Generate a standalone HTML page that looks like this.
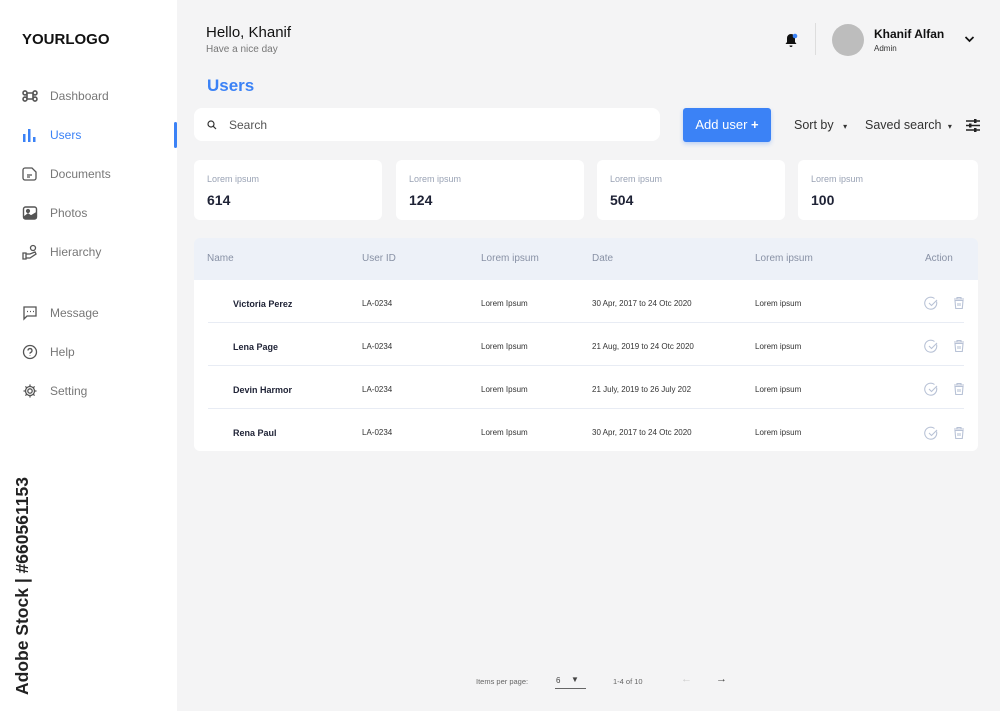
<!DOCTYPE html><html><head><style>
*{margin:0;padding:0;box-sizing:border-box}
body{width:1000px;height:711px;background:#f4f4f5;font-family:"Liberation Sans",sans-serif;position:relative;overflow:hidden;color:#222}
.a{position:absolute}
.side{left:0;top:0;width:177px;height:711px;background:#fff}
.nav{left:22px;font-size:12px;color:#777;display:flex;align-items:center;gap:12px}
.nav svg{width:16px;height:16px}
.card{background:#fff;border-radius:6px;top:160px;height:60px}
.card .l{position:absolute;left:13px;top:14px;font-size:9px;color:#9aa3b5}
.card .v{position:absolute;left:13px;top:32px;font-size:14px;font-weight:bold;color:#1e2235}
.th{font-size:10px;color:#8891a5;top:253px}
.row{left:194px;width:784px;height:43px;background:#fff}
.row span{position:absolute;top:19px;font-size:8px;color:#333}
.row .n{font-weight:bold;color:#1e2235;font-size:9px}
.row .ln{position:absolute;left:14px;right:14px;bottom:0;border-bottom:1px solid #e8ecf4}
</style></head><body>
<div class="a side"></div>
<div class="a" style="left:22px;top:31px;font-size:15px;font-weight:bold;color:#111">YOURLOGO</div>
<div class="a nav" style="top:88px"><svg viewBox="0 0 16 16" fill="none" stroke="#555" stroke-width="1.6"><path d="M5 5h6v6H5zM5 5a2 2 0 1 1 0-0.1M11 5a2 2 0 1 0 0-.1M5 11a2 2 0 1 0 0 .1M11 11a2 2 0 1 1 0 .1"/></svg>Dashboard</div>
<div class="a nav" style="top:127px;color:#3b82f6"><svg viewBox="0 0 16 16" fill="#3b82f6"><rect x="1" y="7" width="2.5" height="8"/><rect x="6" y="2" width="2.5" height="13"/><rect x="11" y="10" width="2.5" height="5"/></svg>Users</div>
<div class="a" style="left:174px;top:122px;width:3px;height:26px;background:#3b82f6;border-radius:2px"></div>
<div class="a nav" style="top:166px"><svg viewBox="0 0 16 16" fill="none" stroke="#555" stroke-width="1.3"><path d="M3 2h7l4 4v6a2 2 0 0 1-2 2H3a2 2 0 0 1-2-2V4a2 2 0 0 1 2-2zM5 9h5M5 11h3"/></svg>Documents</div>
<div class="a nav" style="top:205px"><svg viewBox="0 0 16 16" fill="none" stroke="#555" stroke-width="1.4"><rect x="1.5" y="2" width="13" height="12" rx="2"/><circle cx="6" cy="6" r="1.4" fill="#555"/><path d="M2 12l4-3 3 2 5-3v5H2z" fill="#555"/></svg>Photos</div>
<div class="a nav" style="top:244px"><svg viewBox="0 0 16 16" fill="none" stroke="#555" stroke-width="1.3"><circle cx="11" cy="4" r="2.5"/><path d="M1 9h3v6H1zM4 10h4l5-2 1 2-6 4H4"/></svg>Hierarchy</div>
<div class="a nav" style="top:305px"><svg viewBox="0 0 16 16" fill="none" stroke="#555" stroke-width="1.3"><path d="M2 2h12v9H5l-3 3z"/><path d="M5 6.5h1M8 6.5h1M11 6.5h1"/></svg>Message</div>
<div class="a nav" style="top:344px"><svg viewBox="0 0 16 16" fill="none" stroke="#555" stroke-width="1.3"><circle cx="8" cy="8" r="6.5"/><path d="M6 6.5a2 2 0 1 1 2.5 2c-.5.2-.5.6-.5 1.2M8 11.5v.5"/></svg>Help</div>
<div class="a nav" style="top:383px"><svg viewBox="0 0 16 16" fill="none" stroke="#555" stroke-width="1.3"><circle cx="8" cy="8" r="2.2"/><path d="M8 1.5v2M8 12.5v2M1.5 8h2M12.5 8h2M3.4 3.4l1.4 1.4M11.2 11.2l1.4 1.4M3.4 12.6l1.4-1.4M11.2 4.8l1.4-1.4"/><circle cx="8" cy="8" r="4.5"/></svg>Setting</div>
<div class="a" style="left:12px;top:695px;transform:rotate(-90deg);transform-origin:0 0;font-size:17.5px;font-weight:bold;color:#222;white-space:nowrap;width:230px">Adobe Stock | #660561153</div>

<div class="a" style="left:206px;top:24px;font-size:15px;color:#111">Hello, Khanif</div>
<div class="a" style="left:206px;top:44px;font-size:10px;color:#777">Have a nice day</div>
<svg class="a" style="left:783px;top:32px" width="16" height="16" viewBox="0 0 16 16"><path d="M8 2a4 4 0 0 0-4 4v4l-1.5 2h11L12 10V6a4 4 0 0 0-4-4zM6.5 13.5a1.5 1.5 0 0 0 3 0z" fill="#111"/><circle cx="12" cy="4" r="2.3" fill="#3b82f6"/></svg>
<div class="a" style="left:815px;top:23px;width:1px;height:32px;background:#ddd"></div>
<div class="a" style="left:832px;top:24px;width:32px;height:32px;border-radius:50%;background:#bdbdbd"></div>
<div class="a" style="left:874px;top:27px;font-size:12px;font-weight:bold;color:#111">Khanif Alfan</div>
<div class="a" style="left:874px;top:44px;font-size:8px;color:#333">Admin</div>
<svg class="a" style="left:964px;top:35px" width="11" height="8"><path d="M1.5 2l4 4 4-4" stroke="#111" stroke-width="1.7" fill="none"/></svg>

<div class="a" style="left:207px;top:76px;font-size:17px;font-weight:bold;color:#3b82f6">Users</div>
<div class="a" style="left:194px;top:108px;width:466px;height:33px;background:#fff;border-radius:8px"></div>
<svg class="a" style="left:207px;top:120px" width="10" height="10"><circle cx="4" cy="4" r="3" stroke="#333" stroke-width="1.2" fill="none"/><path d="M6.3 6.3l2.7 2.7" stroke="#333" stroke-width="1.2"/></svg>
<div class="a" style="left:229px;top:118px;font-size:12px;color:#555">Search</div>
<div class="a" style="left:683px;top:108px;width:88px;height:34px;background:#3b82f6;border-radius:3px;color:#fff;font-size:13px;line-height:34px;text-align:center;box-shadow:0 2px 4px rgba(59,130,246,.3)">Add user <b>+</b></div>
<div class="a" style="left:794px;top:118px;font-size:12.5px;color:#333">Sort by <span style="font-size:8px;margin-left:6px">&#9662;</span></div>
<div class="a" style="left:865px;top:118px;font-size:12.5px;color:#333">Saved search <span style="font-size:8px;margin-left:3px">&#9662;</span></div>
<svg class="a" style="left:965px;top:118px" width="16" height="15"><path d="M1 3h14M1 7.5h14M1 12h14" stroke="#222" stroke-width="1.4"/><rect x="9" y="1" width="2.5" height="4" fill="#222"/><rect x="4" y="5.5" width="2.5" height="4" fill="#222"/><rect x="9" y="10" width="2.5" height="4" fill="#222"/></svg>

<div class="a card" style="left:194px;width:188px"><div class="l">Lorem ipsum</div><div class="v">614</div></div>
<div class="a card" style="left:396px;width:188px"><div class="l">Lorem ipsum</div><div class="v">124</div></div>
<div class="a card" style="left:597px;width:188px"><div class="l">Lorem ipsum</div><div class="v">504</div></div>
<div class="a card" style="left:798px;width:180px"><div class="l">Lorem ipsum</div><div class="v">100</div></div>

<div class="a" style="left:194px;top:238px;width:784px;height:42px;background:#edf1f8;border-radius:6px 6px 0 0"></div>
<div class="a th" style="left:207px">Name</div><div class="a th" style="left:362px">User ID</div><div class="a th" style="left:481px">Lorem ipsum</div><div class="a th" style="left:592px">Date</div><div class="a th" style="left:755px">Lorem ipsum</div><div class="a th" style="left:925px">Action</div>

<div class="a row" style="top:280px"><span class="n" style="left:39px">Victoria Perez</span><span style="left:168px">LA-0234</span><span style="left:287px">Lorem Ipsum</span><span style="left:398px">30 Apr, 2017 to 24 Otc 2020</span><span style="left:561px">Lorem ipsum</span><div class="ln"></div></div>
<div class="a row" style="top:323px"><span class="n" style="left:39px">Lena Page</span><span style="left:168px">LA-0234</span><span style="left:287px">Lorem Ipsum</span><span style="left:398px">21 Aug, 2019 to 24 Otc 2020</span><span style="left:561px">Lorem ipsum</span><div class="ln"></div></div>
<div class="a row" style="top:366px"><span class="n" style="left:39px">Devin Harmor</span><span style="left:168px">LA-0234</span><span style="left:287px">Lorem Ipsum</span><span style="left:398px">21 July, 2019 to 26 July 202</span><span style="left:561px">Lorem ipsum</span><div class="ln"></div></div>
<div class="a row" style="top:409px;height:42px;border-radius:0 0 6px 6px"><span class="n" style="left:39px">Rena Paul</span><span style="left:168px">LA-0234</span><span style="left:287px">Lorem Ipsum</span><span style="left:398px">30 Apr, 2017 to 24 Otc 2020</span><span style="left:561px">Lorem ipsum</span></div>

<svg class="a" style="left:924px;top:296px" width="50" height="150">
<g id="ic" fill="none" stroke="#b8c2d6" stroke-width="1.1"><path d="M12.5 5.5a6 6 0 1 1-2-3"/><path d="M5 7l2.5 2.5L13 4"/><path d="M30 3h10M33 3V1.5h4V3M31 4.5h8l-.7 8h-6.6zM34 7v3M36 7v3"/></g>
<use href="#ic" y="43"/><use href="#ic" y="86"/><use href="#ic" y="130"/></svg>

<div class="a" style="left:476px;top:677px;font-size:7.5px;color:#666">Items per page:</div>
<div class="a" style="left:556px;top:676px;font-size:8px;color:#444">6</div>
<div class="a" style="left:571px;top:675px;font-size:8px;color:#444">&#9660;</div>
<div class="a" style="left:555px;top:688px;width:31px;height:1px;background:#666"></div>
<div class="a" style="left:613px;top:677px;font-size:7.5px;color:#666">1-4 of 10</div>
<div class="a" style="left:681px;top:673px;font-size:11px;color:#ccc">&#8592;</div>
<div class="a" style="left:716px;top:673px;font-size:11px;color:#444">&#8594;</div>
</body></html>
